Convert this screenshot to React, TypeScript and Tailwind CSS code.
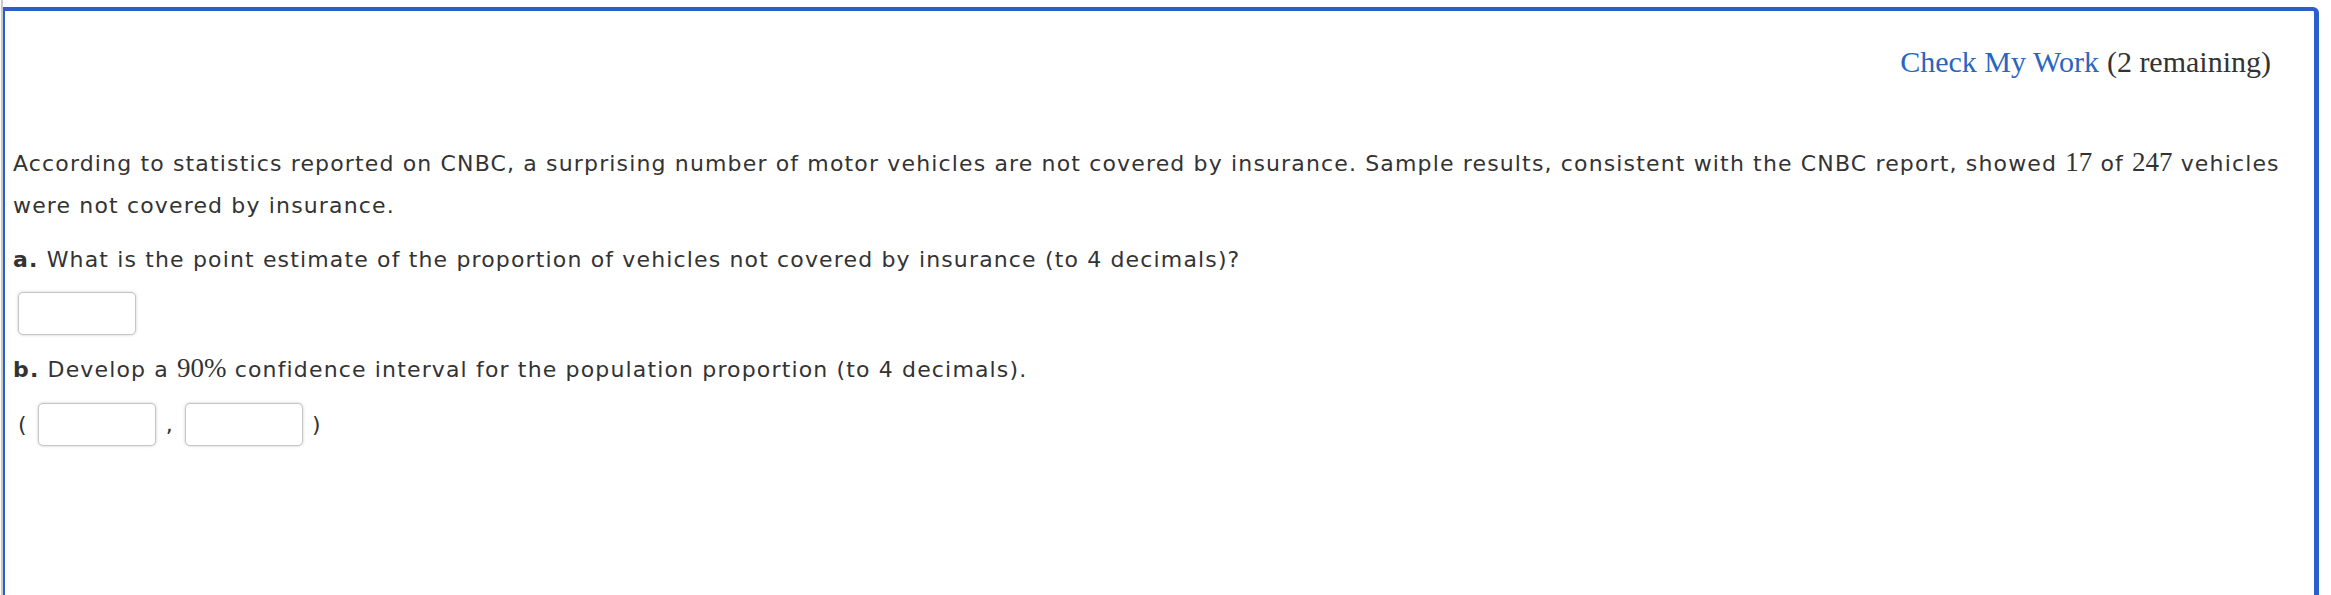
import React from "react";

// Question panel: "Check My Work" header, problem text and answer inputs
const sans = { fontFamily: '"DejaVu Sans", Verdana, sans-serif' };

function Num({ children }: { children: React.ReactNode }) {
  return (
    <span className="font-['Liberation_Serif',serif] text-[27px] tracking-normal">{children}</span>
  );
}

function AnswerBox() {
  return (
    <input
      type="text"
      className="h-[43px] w-[118px] rounded-[5px] border border-[#c6c6c6] bg-white shadow-[0_0_3px_rgba(0,0,0,0.22)] outline-none"
    />
  );
}

export default function App() {
  return (
    <div className="h-[595px] overflow-hidden bg-white">
      <div className="flex h-full pl-px">
        {/* outer grey edge */}
        <div className="w-[2px] shrink-0 bg-[#c9c9c9]" />
        <div className="mr-[12px] mt-[7px] min-h-[620px] flex-1 rounded-tr-[6px] border-l-2 border-r-[5px] border-t-4 border-[#2a5fc8] text-[#333]">
          {/* Header */}
          <div className="flex justify-end pr-[43px] pt-[31px] font-['Liberation_Serif',serif] text-[30px] leading-[40px]">
            <a className="text-[#2a66c0]">Check My Work</a>
            <span className="ml-[8px] text-[#333]">(2 remaining)</span>
          </div>

          <div className="pl-[8px] pr-[20px] text-[22px] tracking-[1.15px]" style={sans}>
            <p className="mt-[59px] leading-[42px]">
              According to statistics reported on CNBC, a surprising number of motor vehicles are not
              covered by insurance. Sample results, consistent with the CNBC report, showed <Num>17</Num> of{" "}
              <Num>247</Num> vehicles were not covered by insurance.
            </p>

            <p className="mt-[12px] leading-[42px]">
              <b>a.</b> What is the point estimate of the proportion of vehicles not covered by insurance
              (to 4 decimals)?
            </p>
            <div className="mt-[11px] pl-[5px]">
              <AnswerBox />
            </div>

            <p className="mt-[12px] leading-[42px]">
              <b>b.</b> Develop a <Num>90%</Num> confidence interval for the population proportion (to 4
              decimals).
            </p>
            <div className="mt-[12px] flex items-center pl-[5px]">
              <span className="mr-[10px]">(</span>
              <AnswerBox />
              <span className="ml-[10px] mr-[11px]">,</span>
              <AnswerBox />
              <span className="ml-[9px]">)</span>
            </div>
          </div>
        </div>
      </div>
    </div>
  );
}
